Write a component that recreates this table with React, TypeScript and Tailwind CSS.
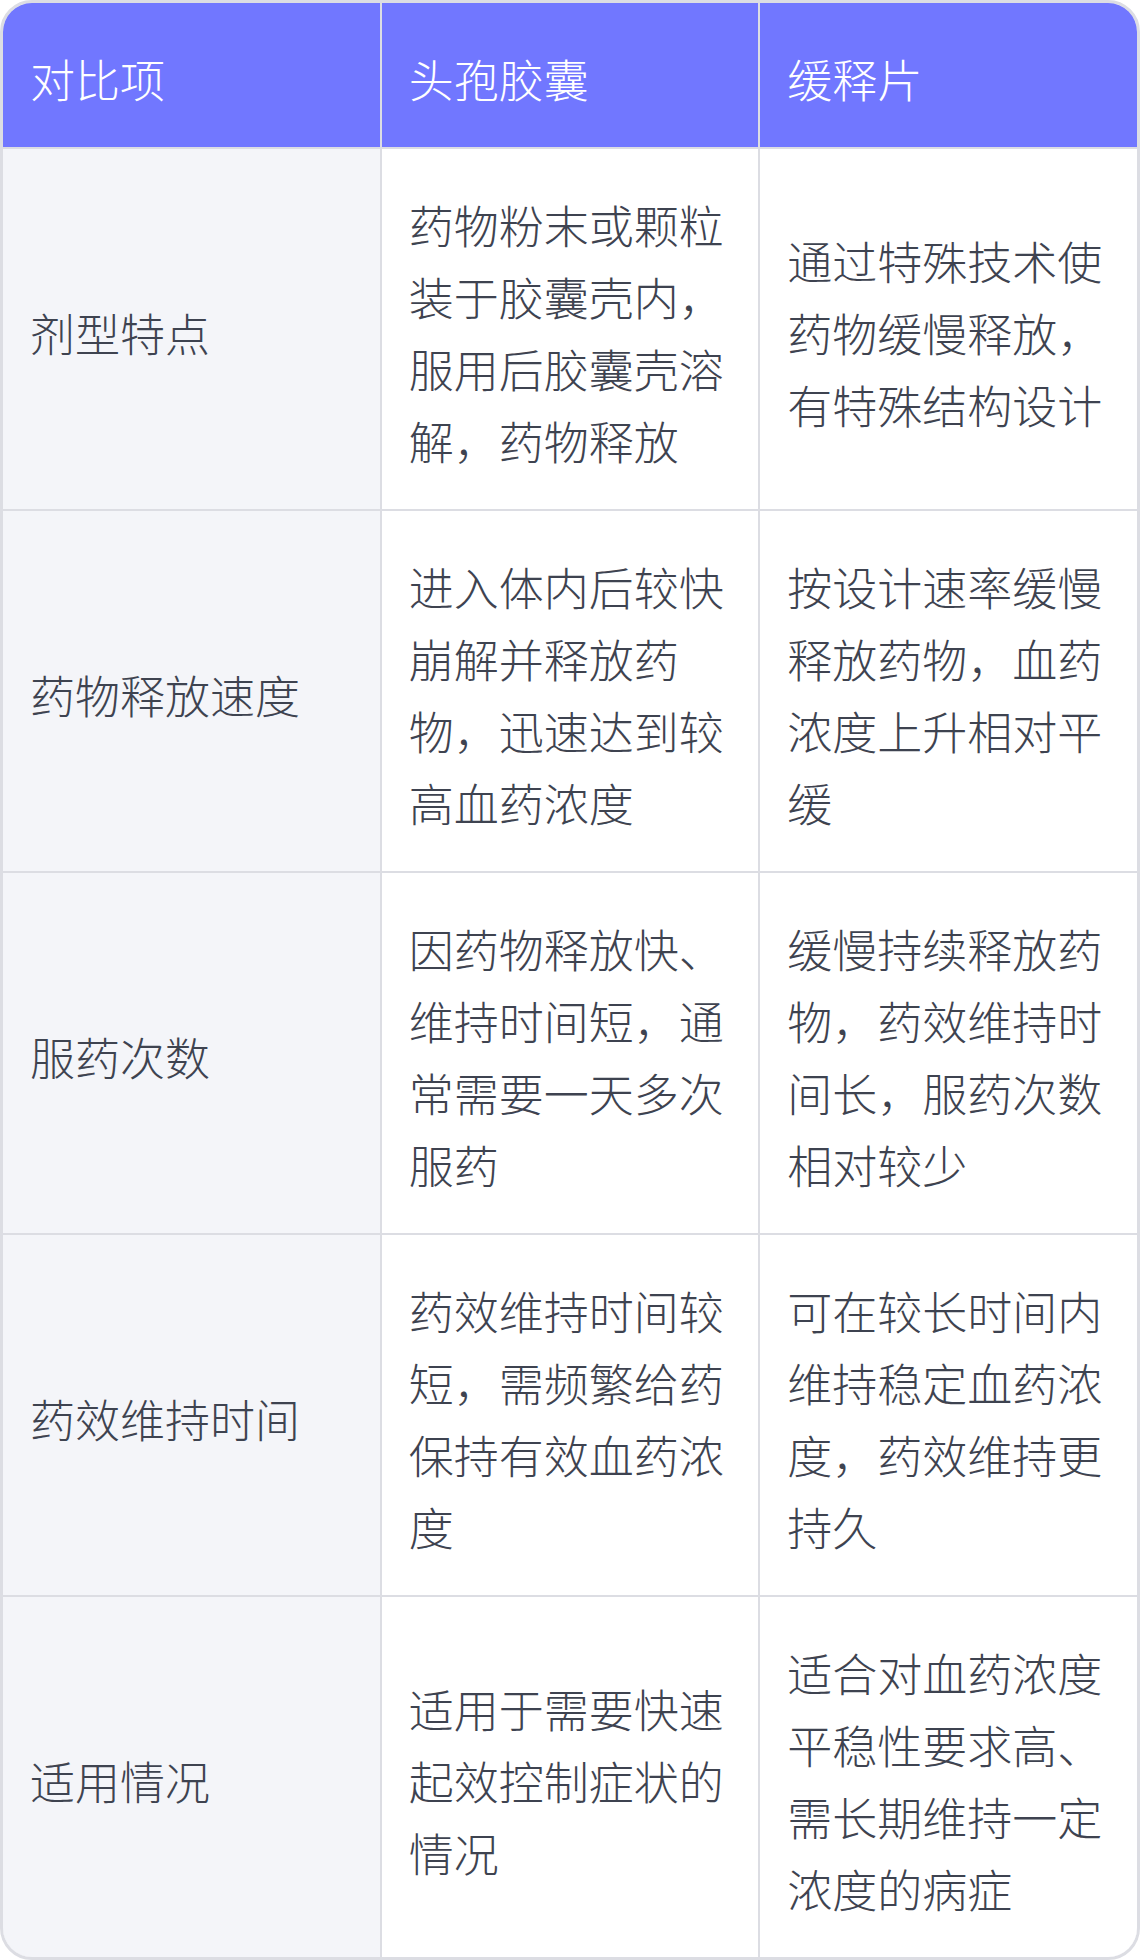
import React from 'react';

const headers = ['对比项', '头孢胶囊', '缓释片'];

const rows: [string, string, string][] = [
  ['剂型特点', '药物粉末或颗粒装于胶囊壳内，服用后胶囊壳溶解，药物释放', '通过特殊技术使药物缓慢释放，有特殊结构设计'],
  ['药物释放速度', '进入体内后较快崩解并释放药物，迅速达到较高血药浓度', '按设计速率缓慢释放药物，血药浓度上升相对平缓'],
  ['服药次数', '因药物释放快、维持时间短，通常需要一天多次服药', '缓慢持续释放药物，药效维持时间长，服药次数相对较少'],
  ['药效维持时间', '药效维持时间较短，需频繁给药保持有效血药浓度', '可在较长时间内维持稳定血药浓度，药效维持更持久'],
  ['适用情况', '适用于需要快速起效控制症状的情况', '适合对血药浓度平稳性要求高、需长期维持一定浓度的病症'],
];

// shared cell text style
const cell = 'text-[45px] leading-[72px] font-light pl-[27px] pr-[29px] pt-[40px] pb-[32px] flex items-center';

export default function App() {
  return (
    <div className="w-[1140px] h-[1960px] bg-white font-['Noto_Sans_CJK_SC',sans-serif]">
      <div className="h-full rounded-[32px] border-[3px] border-[#dcdde3] overflow-hidden">
        <div className="grid grid-cols-3 gap-[2px] bg-[#dcdde3] h-full grid-rows-[144px_repeat(5,1fr)]">
          {headers.map((h) => (
            <div key={h} className={`bg-[#7177ff] text-white ${cell}`}>
              {h}
            </div>
          ))}
          {rows.map((r) => (
            <React.Fragment key={r[0]}>
              <div className={`bg-[#f4f5f9] text-[#3e4350] ${cell}`}>{r[0]}</div>
              <div className={`bg-white text-[#3e4350] ${cell}`}>{r[1]}</div>
              <div className={`bg-white text-[#3e4350] ${cell}`}>{r[2]}</div>
            </React.Fragment>
          ))}
        </div>
      </div>
    </div>
  );
}
